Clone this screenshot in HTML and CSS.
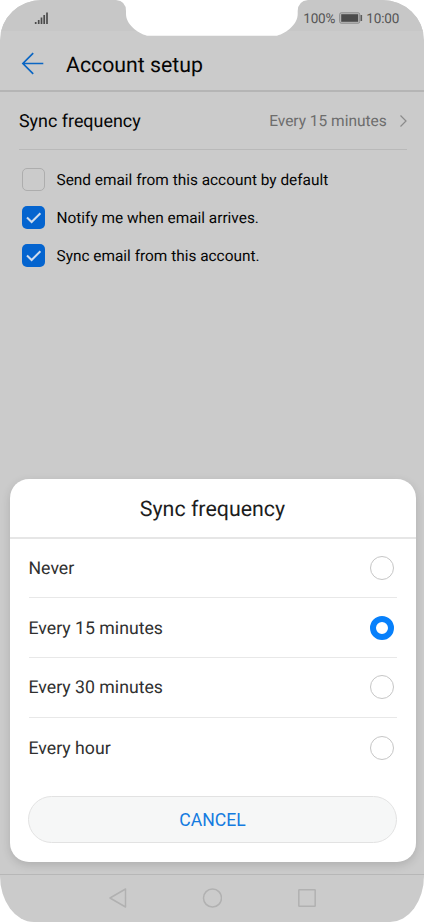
FILE: index.html
```html
<!DOCTYPE html>
<html lang="en">
<head>
<meta charset="utf-8">
<title>Account setup</title>
<link rel="stylesheet" href="styles.css">
</head>
<body>
<div class="phone">
  <svg class="notch" width="198" height="37" viewBox="0 0 198 37"><path d="M0 0H3Q13 1 13 11V14C13 24 24 33 34 35.700H164C174 33 184.700 24 184.700 14V11Q185 1 195 0V-1H0Z" fill="#fff"/></svg>
  <div class="status">
    <svg class="signal" width="14" height="13" viewBox="0 0 14 13"><path d="M1.700 10v2M4.700 8v4M7.500 5.500v6.500M10.200 3v9M13 .5V12" stroke="#4b4b4b" stroke-width="1.700"/></svg>
    <div class="status-right">
      <span>100%</span>
      <svg width="24" height="12" viewBox="0 0 24 12"><rect x=".7" y=".8" width="20" height="10.400" rx="1.500" fill="#bdbdbd" stroke="#8a8a8a"/><rect x="2.200" y="2.200" width="17" height="7.600" fill="#4b4b4b"/><path d="M22.300 3v6" stroke="#5b5b5b" stroke-width="1.600"/></svg>
      <span>10:00</span>
    </div>
  </div>
  <header class="bar">
    <svg width="24" height="24" viewBox="0 0 24 24" fill="none" stroke="#0b66c3" stroke-width="1.700"><path d="M22.300 12.500H1.500M12.200 2.200 1.900 12.500l10.300 10.300"/></svg>
    <h1>Account setup</h1>
  </header>
  <div class="setting">
    <span class="name">Sync frequency</span>
    <span class="value">Every 15 minutes</span>
    <svg width="8" height="14" viewBox="0 0 8 14" fill="none" stroke="#8b8b8b" stroke-width="1.200"><path d="m1.500 1.500 5.500 5.500-5.500 5.500"/></svg>
  </div>
  <div class="checks">
    <div class="check"><i class="box"></i><span>Send email from this account by default</span></div>
    <div class="check"><i class="box on"><svg width="23" height="23" viewBox="0 0 23 23"><path d="m5 11.500 4.600 4.500 8.800-8.800" fill="none" stroke="#cfdced" stroke-width="2"/></svg></i><span>Notify me when email arrives.</span></div>
    <div class="check"><i class="box on"><svg width="23" height="23" viewBox="0 0 23 23"><path d="m5 11.500 4.600 4.500 8.800-8.800" fill="none" stroke="#cfdced" stroke-width="2"/></svg></i><span>Sync email from this account.</span></div>
  </div>
  <section class="dialog">
    <h2>Sync frequency</h2>
    <div class="options">
      <div class="option"><span>Never</span><i class="radio"></i></div>
      <div class="option"><span>Every 15 minutes</span><i class="radio selected"></i></div>
      <div class="option"><span>Every 30 minutes</span><i class="radio"></i></div>
      <div class="option"><span>Every hour</span><i class="radio"></i></div>
    </div>
    <button class="cancel">CANCEL</button>
  </section>
  <nav class="nav">
    <svg width="20" height="20" viewBox="0 0 20 20"><path d="M17.500 1v18L2 10Z"/></svg>
    <svg width="20" height="20" viewBox="0 0 20 20"><circle cx="10.500" cy="10" r="9"/></svg>
    <svg width="20" height="20" viewBox="0 0 20 20"><rect x="1.800" y="1.800" width="16.400" height="16.400" rx=".5"/></svg>
  </nav>
</div>
</body>
</html>
```

FILE: styles.css
```css
* { box-sizing: border-box; }
body { margin: 0; background: #fff; font-family: Roboto, sans-serif; text-rendering: geometricPrecision; }
.phone {
  position: relative;
  display: flex;
  flex-direction: column;
  width: 423.700px;
  height: 922px;
  overflow: hidden;
  background: #cbcbcb;
  border-radius: 42px 42px 34px 34px / 40px 40px 46px 46px;
}
.notch { position: absolute; left: 113px; top: 0; }
.status {
  display: flex;
  justify-content: space-between;
  align-items: center;
  height: 31px;
  padding: 5px 24.500px 0 34px;
  background: #c7c7c7;
}
.status-right { display: flex; align-items: center; gap: 3.500px; color: #555; font-size: 13.500px; letter-spacing: -.15px; }
.status-right span { padding-top: 1px; }
.bar {
  display: flex;
  align-items: center;
  gap: 21px;
  height: 61px;
  padding: 5px 0 0 21px;
  border-bottom: 2px solid #b5b5b5;
}
h1 { margin: 0; padding-top: 5px; font-size: 21.300px; font-weight: 400; line-height: 28px; color: #050505; }
.setting {
  display: flex;
  align-items: center;
  height: 58px;
  margin: 0 17px 0 19px;
  border-bottom: 1px solid #b9b9b9;
}
.name { flex: 1; padding-top: 2px; font-size: 17.900px; color: #050505; }
.value { margin-right: 12px; padding-top: 1px; font-size: 15.500px; letter-spacing: -.02px; color: #6d6d6d; }
.checks { display: flex; flex-direction: column; gap: 15px; padding: 18px 0 0 21.500px; }
.check { display: flex; align-items: center; gap: 12px; height: 23px; font-size: 15.400px; color: #050505; white-space: nowrap; }
.box { display: block; width: 23px; height: 23px; border: 1.500px solid #adadad; border-radius: 5px; }
.box.on { border: 0; background: #0464cf; }
.box svg { display: block; }
.dialog {
  display: flex;
  flex-direction: column;
  width: 406px;
  height: 383px;
  margin: 212px 0 0 9.500px;
  background: #fff;
  border-radius: 19px;
  box-shadow: 0 3px 10px rgba(0, 0, 0, .14);
}
h2 {
  height: 59.500px;
  margin: 0;
  border-bottom: 2px solid #e6e6e6;
  font-size: 21.400px;
  font-weight: 400;
  line-height: 61px;
  text-align: center;
  color: #1d1d1d;
}
.options { padding: 0 19px; }
.option {
  display: flex;
  align-items: center;
  justify-content: space-between;
  height: 59.800px;
  padding-right: 2.600px;
  border-bottom: 1px solid #e8e8e8;
  font-size: 17.700px;
  color: #303030;
}
.option span { padding-top: 2px; }
.option:last-child { border-bottom: 0; }
.radio { width: 24px; height: 24px; border: 1px solid #c6c6c6; border-radius: 50%; }
.radio.selected { border: 6px solid #0780fb; }
.cancel {
  width: 369px;
  height: 47px;
  margin: 18.300px 0 0 18.500px;
  padding: 2px 0 0;
  border: 1px solid #e2e2e2;
  border-radius: 24px;
  background: #f6f7f7;
  font: 17.600px Roboto, sans-serif;
  color: #147be0;
}
.nav {
  display: flex;
  justify-content: center;
  align-items: center;
  gap: 74.700px;
  height: 48px;
  margin-top: auto;
  padding: 0 0 2px 1px;
  border-top: 1px solid #b7b7b7;
}
.nav svg { fill: none; stroke: #b1b1b1; stroke-width: 1.500; stroke-linejoin: round; }
```
